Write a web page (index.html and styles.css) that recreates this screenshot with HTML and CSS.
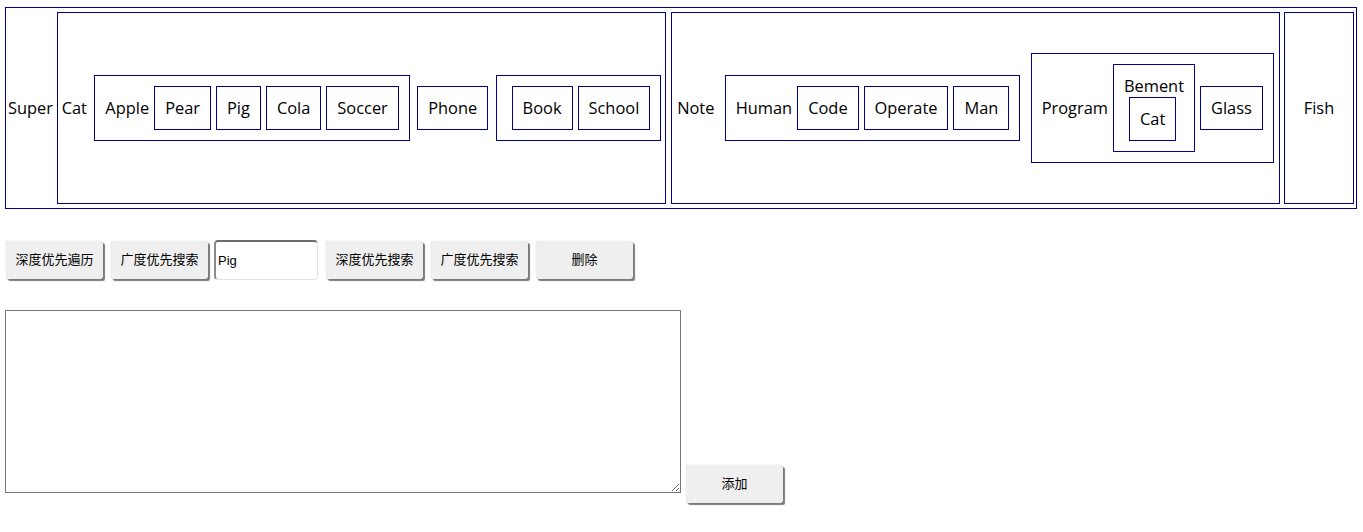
FILE: index.html
```html
<!DOCTYPE html>
<html>
<head>
<meta charset="utf-8">
<link rel="stylesheet" href="styles.css">
</head>
<body>
<div class="page">
  <div class="tree">
    <span class="super">Super</span>
    <div class="col cat">
      <span>Cat</span>
      <div class="node">Apple
        <div class="node">Pear</div>
        <div class="node">Pig</div>
        <div class="node">Cola</div>
        <div class="node">Soccer</div>
      </div>
      <div class="node">Phone</div>
      <div class="node">
        <div class="node">Book</div>
        <div class="node">School</div>
      </div>
    </div>
    <div class="col note">
      <span>Note</span>
      <div class="node">Human
        <div class="node">Code</div>
        <div class="node">Operate</div>
        <div class="node">Man</div>
      </div>
      <div class="node">Program
        <div class="node stack">Bement
          <div class="node">Cat</div>
        </div>
        <div class="node">Glass</div>
      </div>
    </div>
    <div class="col fish">
      <span>Fish</span>
    </div>
  </div>

  <div class="toolbar">
    <button class="btn">深度优先遍历</button>
    <button class="btn">广度优先搜索</button>
    <input class="field" type="text" value="Pig">
    <button class="btn">深度优先搜索</button>
    <button class="btn">广度优先搜索</button>
    <button class="btn">删除</button>
  </div>

  <div class="editor">
    <textarea class="area"></textarea>
    <button class="btn">添加</button>
  </div>
</div>
</body>
</html>
```

FILE: styles.css
```css
html, body {
  margin: 0;
  padding: 0;
  background: #fff;
}

.page {
  padding: 7px 5px;
  font-family: "Open Sans", "Noto Sans", sans-serif;
  font-size: 16.4px;
  color: #000;
}

.tree {
  display: flex;
  width: 1352px;
  box-sizing: border-box;
  border: 1px solid #00008b;
  padding: 4px 2px;
  line-height: 22px;
}

.super {
  flex: 1;
  align-self: center;
  white-space: nowrap;
}

.col {
  display: flex;
  justify-content: space-around;
  align-items: center;
  height: 192px;
  box-sizing: border-box;
  border: 1px solid #00008b;
}

.cat {
  width: 609px;
}

.note {
  width: 609px;
  margin-left: 5px;
}

.fish {
  width: 70px;
  margin-left: 4px;
  justify-content: center;
}

.node {
  display: flex;
  align-items: center;
  border: 1px solid #00008b;
  padding: 10px;
  white-space: nowrap;
}

.node > .node {
  margin-left: 5px;
}

.stack {
  flex-direction: column;
  align-items: flex-start;
}

.toolbar {
  display: flex;
  align-items: center;
  gap: 8px;
  height: 40px;
  margin-top: 31px;
  padding-left: 1px;
}

.btn {
  width: 97px;
  height: 38px;
  margin: 0;
  padding: 0 0 3px 0;
  border: none;
  border-radius: 3px;
  background: #efefef;
  box-shadow: 2px 2px 1px -0.5px #7a7a7a, 0 0 1px rgba(0, 0, 0, 0.35);
  font-family: "Noto Sans CJK SC", "Microsoft YaHei", sans-serif;
  font-size: 13px;
  color: #000;
}

.field {
  width: 104px;
  height: 40px;
  box-sizing: border-box;
  margin: 0 0 0 -2px;
  padding: 0 2px;
  border: 1px solid #e2e2e2;
  border-top: 2px solid #6e6e6e;
  border-left: 2px solid #8a8a8a;
  border-radius: 4px;
  font-family: "Liberation Sans", Arial, sans-serif;
  font-size: 13px;
  color: #000;
  background: #fff;
}

.editor {
  display: flex;
  align-items: flex-end;
  gap: 5px;
  margin-top: 30px;
}

.area {
  width: 676px;
  height: 183px;
  box-sizing: border-box;
  margin: 0 0 10px 0;
  border: 1px solid #767676;
  padding: 2px;
  resize: both;
  font-family: "Liberation Mono", monospace;
}
```
